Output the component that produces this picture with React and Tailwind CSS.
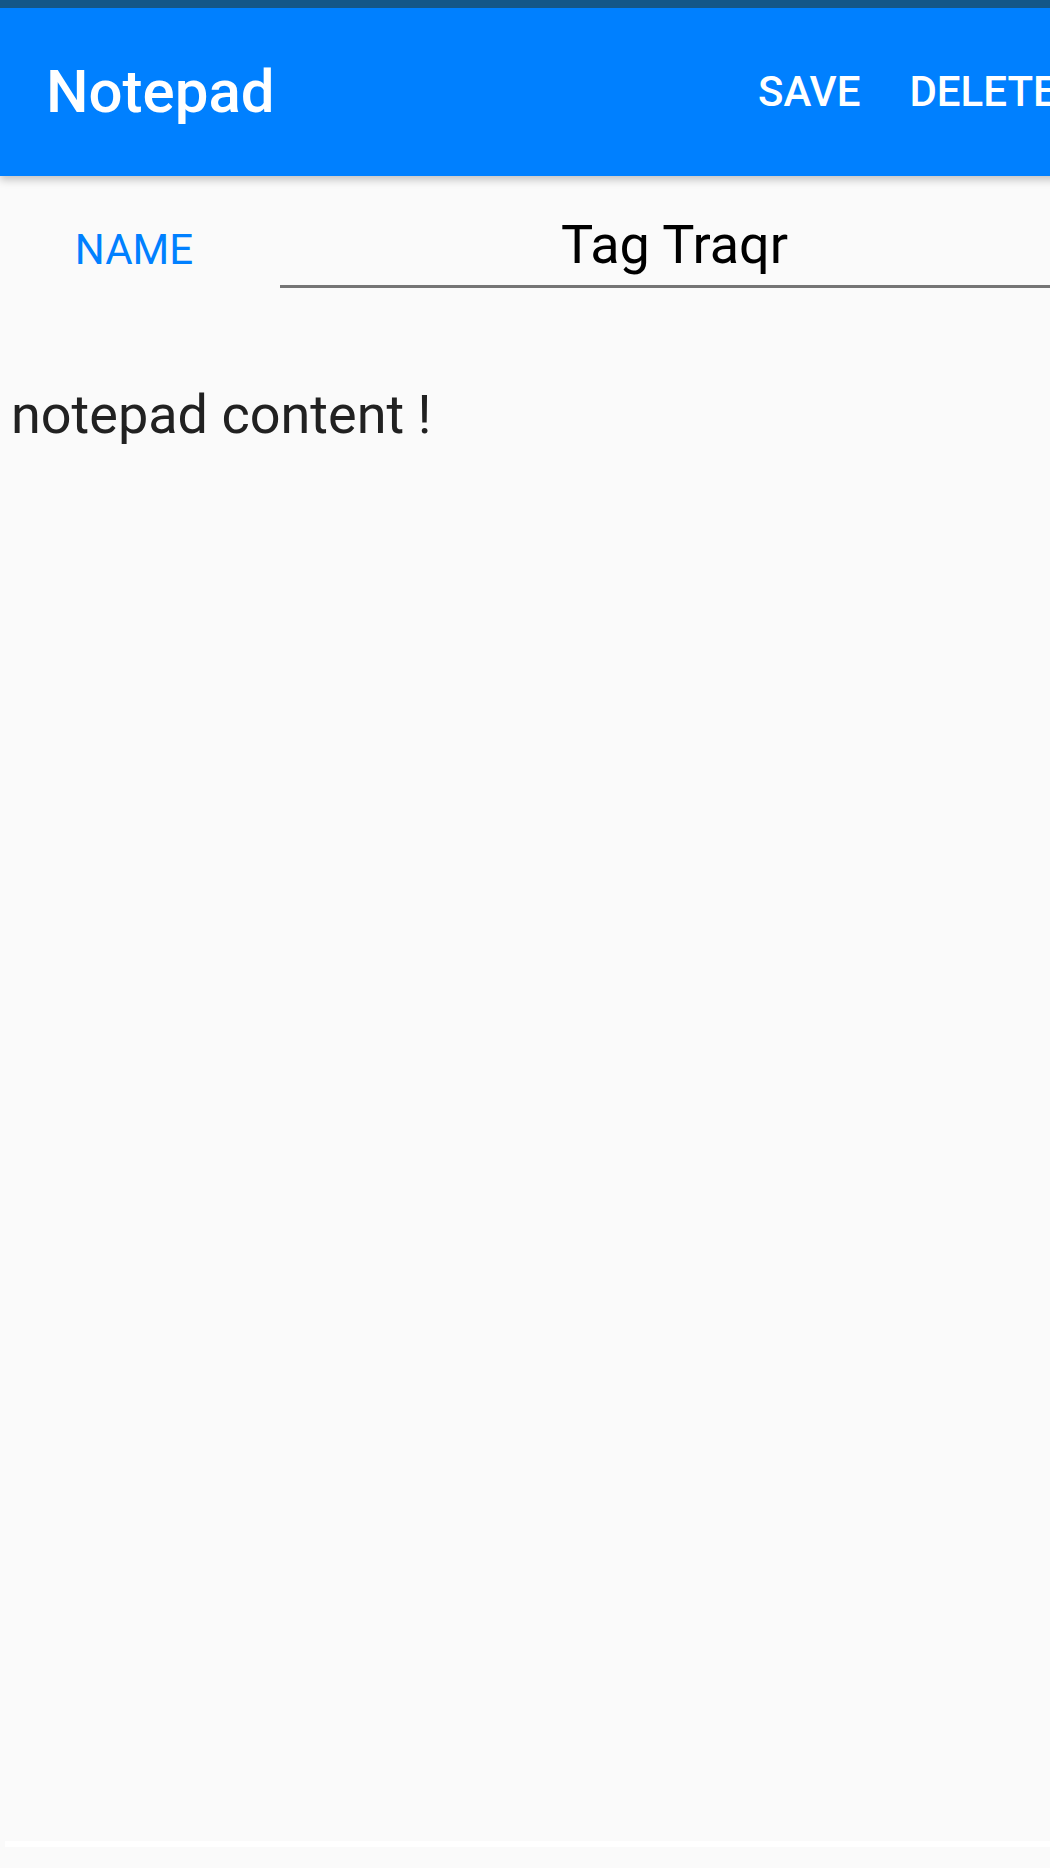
export default function App() {
  return (
    <div className="h-[1868px] w-[1050px] overflow-hidden bg-[#fafafa] font-['Roboto',sans-serif]">
      <div className="w-[1100px]">
        <header className="relative z-10 shadow-[0_4px_8px_rgba(0,0,0,0.22)]">
          <div className="h-[8px] bg-[#135789]" />
          <div className="flex h-[168px] items-center bg-[#0080ff] text-white">
            <div className="w-[758px] shrink-0 pl-[46px] text-[60px] font-medium leading-none">Notepad</div>
            <button className="shrink-0 text-[42px] font-medium leading-none">SAVE</button>
            <button className="ml-[49px] shrink-0 whitespace-nowrap text-[42px] font-medium leading-none">DELETE</button>
          </div>
        </header>

        <section className="mt-[37px] flex items-start">
          <label className="mt-[12px] w-[268px] shrink-0 text-center text-[42px] leading-[50px] text-[#0080ff]">
            NAME
          </label>
          <div className="ml-[12px] w-[789px] shrink-0 border-b-[3px] border-[#757575] pb-[9px] text-center text-[54px] leading-[63px] text-black">
            Tag Traqr
          </div>
        </section>

        <div className="mt-[95px] h-[1458px] pl-[11px] text-[54px] leading-[63px] text-[#212121]">
          notepad content !
        </div>
        <div className="ml-[5px] h-[6px] bg-white" />
      </div>
    </div>
  );
}
